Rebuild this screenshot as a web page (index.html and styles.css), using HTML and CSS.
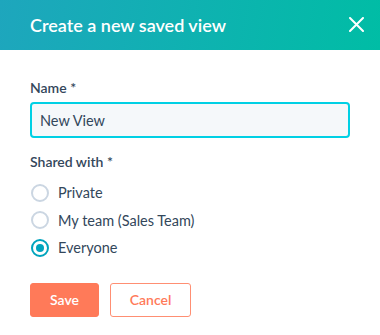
FILE: index.html
```html
<!DOCTYPE html>
<html lang="en">
<head>
  <meta charset="UTF-8">
  <title>Create a new saved view</title>
  <link rel="stylesheet" href="styles.css">
</head>
<body>
  <div class="modal">
    <header class="modal-header">
      <h1>Create a new saved view</h1>
      <button class="close-btn" aria-label="Close">
        <svg width="15" height="15" viewBox="0 0 15 15">
          <path d="M1 1 L14 14 M14 1 L1 14" stroke="#fff" stroke-width="2" stroke-linecap="round"/>
        </svg>
      </button>
    </header>

    <form class="modal-body">
      <label class="field-label" for="name">Name *</label>
      <input class="text-input" type="text" id="name" value="New View">

      <div class="field-label shared">Shared with *</div>
      <div class="radio-list">
        <label class="radio"><input type="radio" name="shared"><span class="dot"></span>Private</label>
        <label class="radio"><input type="radio" name="shared"><span class="dot"></span>My team (Sales Team)</label>
        <label class="radio"><input type="radio" name="shared" checked><span class="dot"></span>Everyone</label>
      </div>

      <div class="actions">
        <button type="submit" class="btn btn-primary">Save</button>
        <button type="button" class="btn btn-secondary">Cancel</button>
      </div>
    </form>
  </div>
</body>
</html>
```

FILE: styles.css
```css
* {
  box-sizing: border-box;
}

body {
  margin: 0;
  font-family: 'Lato', sans-serif;
  color: #33475b;
  background: #fff;
}

.modal-header {
  height: 50px;
  display: flex;
  align-items: center;
  justify-content: space-between;
  padding: 0 15px 0 30px;
  background: linear-gradient(100deg, #1ea6bd 0%, #00bda5 100%);
}

.modal-header h1 {
  margin: 0;
  font-size: 18px;
  font-weight: 600;
  color: #fff;
}

.close-btn {
  background: transparent;
  border: none;
  padding: 0;
  width: 16px;
  height: 16px;
  display: flex;
  cursor: pointer;
}

.modal-body {
  padding: 29px 30px 0;
}

.field-label {
  display: block;
  font-size: 14px;
  font-weight: 600;
  line-height: 18px;
  margin-bottom: 5px;
}

.field-label.shared {
  margin-top: 15px;
  margin-bottom: 8px;
}

.text-input {
  display: block;
  width: 320px;
  height: 36px;
  padding: 0 8px;
  border: 2px solid #00d0e4;
  border-radius: 4px;
  background: #f5f8fa;
  font-family: inherit;
  font-size: 14.5px;
  color: #33475b;
  outline: none;
}

.radio-list {
  display: flex;
  flex-direction: column;
}

.radio {
  display: flex;
  align-items: center;
  height: 27.5px;
  font-size: 14.5px;
  cursor: pointer;
}

.radio input {
  display: none;
}

.dot {
  width: 18px;
  height: 18px;
  border: 2px solid #cbd6e2;
  border-radius: 50%;
  margin-left: 1px;
  margin-right: 9px;
  display: flex;
  align-items: center;
  justify-content: center;
}

.radio input:checked + .dot {
  border-color: #00a4bd;
}

.radio input:checked + .dot::after {
  content: "";
  width: 8px;
  height: 8px;
  border-radius: 50%;
  background: #00a4bd;
}

.actions {
  display: flex;
  gap: 11px;
  margin-top: 21px;
}

.btn {
  height: 34px;
  border-radius: 3px;
  font-family: inherit;
  font-size: 14px;
  font-weight: 600;
  cursor: pointer;
}

.btn-primary {
  width: 69px;
  background: #ff7a59;
  border: 1px solid #ff7a59;
  color: #fff;
}

.btn-secondary {
  width: 81px;
  background: #fff;
  border: 1px solid #ff8f73;
  color: #ff7a59;
}
```
